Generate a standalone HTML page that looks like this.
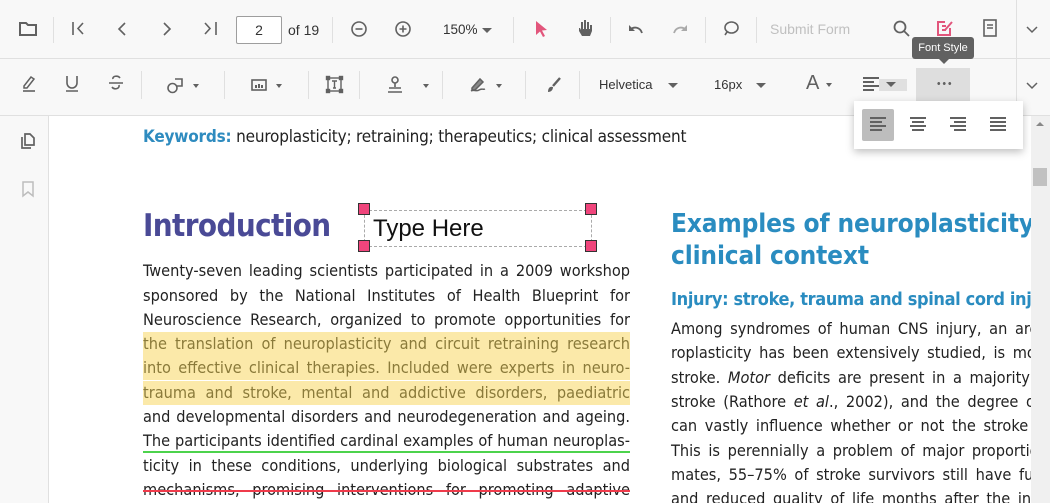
<!DOCTYPE html>
<html><head><meta charset="utf-8"><style>
*{margin:0;padding:0;box-sizing:border-box}
body{width:1050px;height:503px;overflow:hidden;background:#fff;font-family:"Liberation Sans",sans-serif;position:relative}
.tb{position:absolute;left:0;width:1050px;background:#f8f8f8;border-bottom:1px solid #e0e0e0}
.a{position:absolute}
.sep{position:absolute;width:1px;background:#e0e0e0}
svg{position:absolute;overflow:visible}
.t{position:absolute;left:143px;width:487px;font-size:16.2px;color:#222;text-align:justify;text-align-last:justify;white-space:nowrap;height:24px;line-height:24px;font-family:"DejaVu Sans Condensed","Liberation Sans",sans-serif}
.r{position:absolute;left:671px;font-size:16.2px;color:#222;white-space:nowrap;line-height:24px;word-spacing:3px;font-family:"DejaVu Sans Condensed","Liberation Sans",sans-serif}
.hl{background:#fbe9a9;color:#8a7a3a}
.dd{position:absolute;width:0;height:0;border-left:5px solid transparent;border-right:5px solid transparent;border-top:5px solid #616161}
.dds{border-left-width:3.5px;border-right-width:3.5px;border-top-width:4px}
</style></head><body>
<div class="tb" style="top:0;height:59px"></div>
<div class="tb" style="top:59px;height:57px"></div>
<svg style="left:19px;top:21px" width="18" height="16"><path d="M1 2h6l2 2h8v10H1z" fill="none" stroke="#616161" stroke-width="2"/></svg>
<div class="sep" style="left:53px;top:17px;height:26px"></div>
<svg style="left:72px;top:22px" width="14" height="14" fill="none" stroke="#616161" stroke-width="1.6"><path d="M1 0v13M11 1L6 6.5 11 12"/></svg>
<svg style="left:117px;top:22px" width="10" height="14" fill="none" stroke="#616161" stroke-width="1.6"><path d="M8 1L2 7l6 6"/></svg>
<svg style="left:162px;top:22px" width="10" height="14" fill="none" stroke="#616161" stroke-width="1.6"><path d="M2 1l6 6-6 6"/></svg>
<svg style="left:204px;top:22px" width="14" height="14" fill="none" stroke="#616161" stroke-width="1.6"><path d="M1 1l5 5.5L1 12M12 0v13"/></svg>
<div class="a" style="left:236px;top:16px;width:46px;height:28px;border:1px solid #9e9e9e;border-radius:2px;background:#fff;font-size:14px;color:#333;text-align:center;line-height:26px">2</div>
<div class="a" style="left:288px;top:22px;font-size:14px;color:#333">of 19</div>
<div class="sep" style="left:332px;top:17px;height:26px"></div>
<svg style="left:351px;top:21px" width="16" height="16" fill="none" stroke="#616161" stroke-width="1.6"><circle cx="8" cy="8" r="7"/><path d="M4.5 8h7"/></svg>
<svg style="left:395px;top:21px" width="16" height="16" fill="none" stroke="#616161" stroke-width="1.6"><circle cx="8" cy="8" r="7"/><path d="M4.5 8h7M8 4.5v7"/></svg>
<div class="a" style="left:443px;top:22px;font-size:13.5px;color:#333">150%</div>
<div class="dd" style="left:482px;top:28px"></div>
<div class="sep" style="left:513px;top:17px;height:26px"></div>
<svg style="left:535px;top:21px" width="14" height="16"><path d="M1 0l11 9-5 .5 3 5.5-2 1-3-5.5L1 14z" fill="#e2567c"/></svg>
<svg style="left:577px;top:19px" width="16" height="18"><path d="M2 9v3l3 5h8l2-5V6h-2v4h-1V3h-2v7H9V1H7v9H6V3H4v8L3 9z" fill="#616161"/></svg>
<div class="sep" style="left:610px;top:17px;height:26px"></div>
<svg style="left:628px;top:24px" width="16" height="10" fill="none" stroke="#616161" stroke-width="1.8"><path d="M14 9C12 3 6 2 2 6"/><path d="M1 1v6h6" fill="#616161" stroke="none"/></svg>
<svg style="left:672px;top:24px" width="16" height="10" fill="none" stroke="#aaa" stroke-width="1.8"><path d="M2 9C4 3 10 2 14 6"/><path d="M15 1v6H9" fill="#aaa" stroke="none"/></svg>
<div class="sep" style="left:705px;top:17px;height:26px"></div>
<svg style="left:723px;top:21px" width="16" height="15" fill="none" stroke="#616161" stroke-width="1.6"><ellipse cx="8.5" cy="6.5" rx="6.5" ry="5.5"/><path d="M4 11l-2 3"/></svg>
<div class="sep" style="left:756px;top:17px;height:26px"></div>
<div class="a" style="left:770px;top:21px;font-size:14px;color:#c0c0c0">Submit Form</div>
<svg style="left:893px;top:20px" width="18" height="18" fill="none" stroke="#616161" stroke-width="1.8"><circle cx="7" cy="7" r="5.5"/><path d="M11 11l5 5"/></svg>
<svg style="left:936px;top:19px" width="18" height="18" fill="none" stroke="#e2567c" stroke-width="2"><path d="M14 9v7H2V3h7"/><path d="M6 7h4M6 11h4M9 11l7-8" /></svg>
<svg style="left:983px;top:19px" width="14" height="18" fill="none" stroke="#616161" stroke-width="1.6"><rect x="1" y="1" width="12" height="16"/><path d="M4 6h6M4 9h6"/></svg>
<div class="sep" style="left:1016px;top:0;height:116px"></div>
<svg style="left:1026px;top:26px" width="12" height="8" fill="none" stroke="#616161" stroke-width="1.5"><path d="M1 1l5 5 5-5"/></svg>
<svg style="left:1026px;top:82px" width="12" height="8" fill="none" stroke="#616161" stroke-width="1.5"><path d="M1 1l5 5 5-5"/></svg>
<div class="a" style="left:912px;top:37px;width:62px;height:22px;background:#616161;border-radius:3px;color:#fff;font-size:11px;text-align:center;line-height:22px">Font Style</div>
<div class="a" style="left:939px;top:59px;width:0;height:0;border-left:5px solid transparent;border-right:5px solid transparent;border-top:5px solid #616161"></div>
<svg style="left:21px;top:75px" width="16" height="18"><path d="M3 11l7-9 3 2-7 9H3z" fill="none" stroke="#616161" stroke-width="1.5"/><path d="M2 16h12" stroke="#616161" stroke-width="1.6"/></svg>
<svg style="left:65px;top:75px" width="14" height="18" fill="none" stroke="#616161" stroke-width="1.6"><path d="M2 1v7a5 5 0 0010 0V1M1 16h12"/></svg>
<svg style="left:109px;top:75px" width="14" height="16" fill="none" stroke="#616161" stroke-width="1.6"><path d="M11 3C9 0 3 1 4 4M3 12c2 3 8 2 7-2M0 8h14"/></svg>
<div class="sep" style="left:141px;top:71px;height:28px"></div>
<svg style="left:167px;top:77px" width="18" height="17" fill="none" stroke="#616161" stroke-width="1.6"><circle cx="5.5" cy="11" r="4.5"/><path d="M8 2h7v7H9"/></svg>
<div class="dd dds" style="left:193px;top:84px"></div>
<div class="sep" style="left:224px;top:71px;height:28px"></div>
<svg style="left:251px;top:79px" width="16" height="12"><rect x="1" y="1" width="14" height="10" fill="none" stroke="#616161" stroke-width="1.6"/><path d="M4 9V6h2v3h1V5h2v4h1V6h2v3" fill="#616161"/></svg>
<div class="dd dds" style="left:276px;top:84px"></div>
<div class="sep" style="left:308px;top:71px;height:28px"></div>
<svg style="left:326px;top:76px" width="17" height="17" fill="none" stroke="#616161" stroke-width="1.4"><rect x="2" y="2" width="13" height="13"/><path d="M6 5h5M8.5 5v7M7 12h3"/><rect x="0.5" y="0.5" width="3" height="3" fill="#616161"/><rect x="13.5" y="0.5" width="3" height="3" fill="#616161"/><rect x="0.5" y="13.5" width="3" height="3" fill="#616161"/><rect x="13.5" y="13.5" width="3" height="3" fill="#616161"/></svg>
<div class="sep" style="left:359px;top:71px;height:28px"></div>
<svg style="left:387px;top:76px" width="16" height="18" fill="none" stroke="#616161" stroke-width="1.6"><circle cx="8" cy="4" r="3"/><path d="M8 7v4M2 12h12M1 16h14"/></svg>
<div class="dd dds" style="left:423px;top:84px"></div>
<div class="sep" style="left:442px;top:71px;height:28px"></div>
<svg style="left:469px;top:76px" width="18" height="17" fill="none" stroke="#616161" stroke-width="1.5"><path d="M3 12l8-9 3 3-8 8H3z" fill="#888"/><path d="M2 15c3-2 5 1 8-1s4 0 6-1"/></svg>
<div class="dd dds" style="left:496px;top:84px"></div>
<div class="sep" style="left:525px;top:71px;height:28px"></div>
<svg style="left:546px;top:77px" width="16" height="16"><path d="M14 1L7 9" stroke="#616161" stroke-width="2.4"/><path d="M2 15c0-4 2-6 5-5 0 3-2 5-5 5z" fill="#616161"/></svg>
<div class="sep" style="left:579px;top:71px;height:28px"></div>
<div class="a" style="left:599px;top:77px;font-size:13px;color:#333">Helvetica</div>
<div class="dd" style="left:668px;top:83px"></div>
<div class="a" style="left:714px;top:77px;font-size:13px;color:#333">16px</div>
<div class="dd" style="left:756px;top:83px"></div>
<div class="a" style="left:806px;top:72px;font-size:20px;color:#616161">A</div>
<div class="dd dds" style="left:826px;top:83px"></div>
<svg style="left:863px;top:77px" width="18" height="14" fill="#616161"><rect x="0" y="0" width="16" height="2"/><rect x="0" y="4" width="11" height="2"/><rect x="0" y="8" width="16" height="2"/><rect x="0" y="12" width="11" height="2"/></svg>
<div class="a" style="left:879px;top:79px;width:28px;height:12px;background:#e0e0e0"></div>
<div class="dd" style="left:886px;top:82px"></div>
<div class="a" style="left:916px;top:68px;width:54px;height:33px;background:#dedede"></div>
<div class="a" style="left:936px;top:82px;width:16px;height:3px;background:radial-gradient(circle,#616161 1.3px,transparent 1.6px) 0 0/5.5px 3px repeat-x"></div>
<div class="a" style="left:854px;top:101px;width:169px;height:48px;background:#fff;box-shadow:0 3px 8px rgba(0,0,0,.25)"></div>
<div class="a" style="left:862px;top:109px;width:32px;height:32px;background:#bdbdbd;border-radius:2px"></div>
<svg style="left:870px;top:117px" width="150" height="14" fill="#616161">
<rect x="0" y="0" width="16" height="2"/><rect x="0" y="4" width="12" height="2"/><rect x="0" y="8" width="16" height="2"/><rect x="0" y="12" width="12" height="2"/>
<rect x="40" y="0" width="16" height="2"/><rect x="42" y="4" width="12" height="2"/><rect x="40" y="8" width="16" height="2"/><rect x="42" y="12" width="12" height="2"/>
<rect x="80" y="0" width="16" height="2"/><rect x="84" y="4" width="12" height="2"/><rect x="80" y="8" width="16" height="2"/><rect x="84" y="12" width="12" height="2"/>
<rect x="120" y="0" width="16" height="2"/><rect x="120" y="4" width="16" height="2"/><rect x="120" y="8" width="16" height="2"/><rect x="120" y="12" width="16" height="2"/>
</svg>
<div class="a" style="left:0;top:116px;width:49px;height:387px;background:#f8f8f8;border-right:1px solid #e0e0e0"></div>
<svg style="left:21px;top:133px" width="14" height="16" fill="none" stroke="#616161" stroke-width="1.7"><path d="M4 1h5l4 4v7H4zM1 4v11h9"/></svg>
<svg style="left:22px;top:181px" width="12" height="16" fill="none" stroke="#bdbdbd" stroke-width="1.5"><path d="M1 1h10v14l-5-4-5 4z"/></svg>
<div class="a" style="left:1031px;top:116px;width:19px;height:387px;background:#f0f0f0"></div>
<div class="a" style="left:1036px;top:122px;width:0;height:0;border-left:4px solid transparent;border-right:4px solid transparent;border-bottom:4px solid #888"></div>
<div class="a" style="left:1033px;top:168px;width:14px;height:18px;background:#c1c1c1"></div>
<div class="a" style="left:50px;top:116px;width:981px;height:387px;overflow:hidden">
<div style="position:absolute;left:-50px;top:-116px;width:1081px;height:503px">
<div class="a" style="left:143px;top:127px;font-size:17px;color:#222;font-family:'DejaVu Sans Condensed','Liberation Sans',sans-serif;white-space:nowrap;letter-spacing:-0.2px"><b style="color:#2e8bbf">Keywords:</b> neuroplasticity; retraining; therapeutics; clinical assessment</div>
<div class="a" style="left:143px;top:208px;font-size:31px;font-weight:bold;color:#4a4a96;font-family:'DejaVu Sans Condensed','Liberation Sans',sans-serif;letter-spacing:-0.6px">Introduction</div>
<div class="a" style="left:364px;top:210px;width:228px;height:37px;border:1px dashed #aaa"></div>
<div class="a" style="left:373px;top:215px;font-size:24px;color:#111">Type Here</div>
<div class="a" style="left:358px;top:203px;width:12px;height:12px;background:#f0457c;border:1px solid #333"></div>
<div class="a" style="left:585px;top:203px;width:12px;height:12px;background:#f0457c;border:1px solid #333"></div>
<div class="a" style="left:358px;top:240px;width:12px;height:12px;background:#f0457c;border:1px solid #333"></div>
<div class="a" style="left:585px;top:240px;width:12px;height:12px;background:#f0457c;border:1px solid #333"></div>
<div class="t" style="top:259px">Twenty-seven leading scientists participated in a 2009 workshop</div>
<div class="t" style="top:284px">sponsored by the National Institutes of Health Blueprint for</div>
<div class="t" style="top:308px">Neuroscience Research, organized to promote opportunities for</div>
<div class="t hl" style="top:332px">the translation of neuroplasticity and circuit retraining research</div>
<div class="t hl" style="top:356px">into effective clinical therapies. Included were experts in neuro-</div>
<div class="t hl" style="top:381px">trauma and stroke, mental and addictive disorders, paediatric</div>
<div class="t" style="top:405px">and developmental disorders and neurodegeneration and ageing.</div>
<div class="t" style="top:429px">The participants identified cardinal examples of human neuroplas-</div>
<div class="a" style="left:143px;top:451px;width:487px;height:2px;background:#4cd34c"></div>
<div class="t" style="top:454px">ticity in these conditions, underlying biological substrates and</div>
<div class="t" style="top:478px">mechanisms, promising interventions for promoting adaptive</div>
<div class="a" style="left:143px;top:490px;width:487px;height:2px;background:#ef3b4b"></div>
<div class="a" style="left:671px;top:208px;font-size:26px;font-weight:bold;color:#2a8cc0;line-height:32px;white-space:nowrap;font-family:'DejaVu Sans Condensed','Liberation Sans',sans-serif;letter-spacing:-0.15px">Examples of neuroplasticity in<br>clinical context</div>
<div class="a" style="left:671px;top:289px;font-size:18px;font-weight:bold;color:#2a8cc0;white-space:nowrap;font-family:'DejaVu Sans Condensed','Liberation Sans',sans-serif;letter-spacing:-0.35px">Injury: stroke, trauma and spinal cord injury</div>
<div class="r" style="top:317px">Among syndromes of human CNS injury, an area</div>
<div class="r" style="top:341px">roplasticity has been extensively studied, is motor</div>
<div class="r" style="top:366px">stroke. <i>Motor</i> deficits are present in a majority of</div>
<div class="r" style="top:390px">stroke (Rathore <i>et al</i>., 2002), and the degree of</div>
<div class="r" style="top:414px">can vastly influence whether or not the stroke</div>
<div class="r" style="top:439px">This is perennially a problem of major proportions</div>
<div class="r" style="top:463px">mates, 55–75% of stroke survivors still have func</div>
<div class="r" style="top:487px">and reduced quality of life months after the infarct</div>
</div></div>
</body></html>
